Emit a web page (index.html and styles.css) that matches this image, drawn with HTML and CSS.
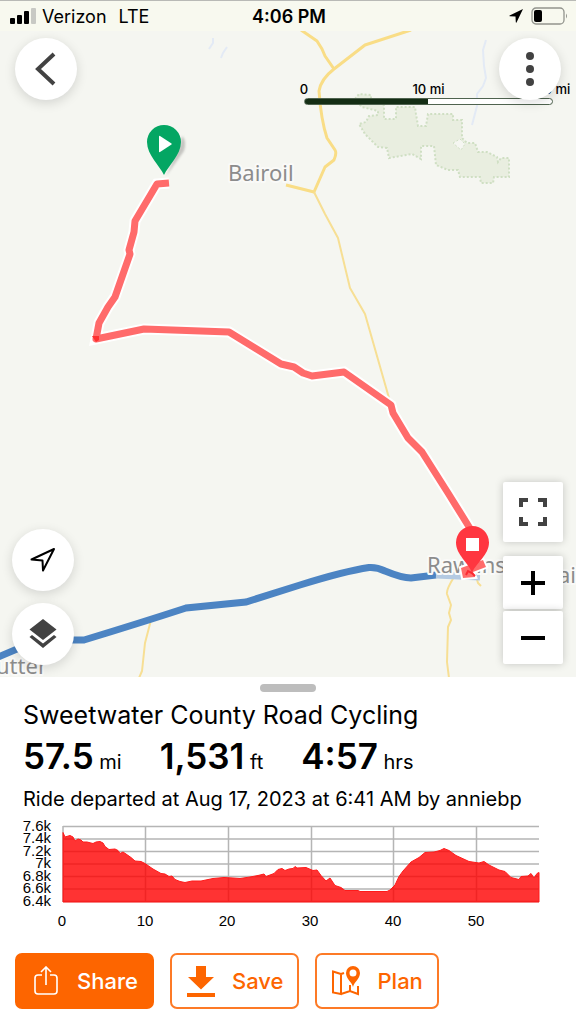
FILE: index.html
```html
<!DOCTYPE html>
<html lang="en">
<head>
  <meta charset="UTF-8" />
  <meta name="viewport" content="width=device-width, initial-scale=1.0"/>
  <title>Sweetwater County Road Cycling</title>
  <link rel="stylesheet" href="styles.css">
</head>
<body>

  <header class="status-bar">
    <div class="status-left">
      <svg class="signal" viewBox="0 0 26 16" width="26" height="16" aria-hidden="true">
        <rect x="0" y="10" width="5" height="6" rx="1"/>
        <rect x="7" y="7" width="5" height="9" rx="1"/>
        <rect x="14" y="3" width="5" height="13" rx="1"/>
        <rect x="21" y="0" width="5" height="16" rx="1" fill="#c8c9c4"/>
      </svg>
      <span>Verizon</span>
      <span class="network">LTE</span>
    </div>
    <div class="clock">4:06 PM</div>
    <div class="status-right">
      <svg viewBox="0 0 14 14" width="14" height="14" aria-hidden="true">
        <path d="M14 0 L7.500 13.500 Q7 14 6.800 13.200 L6.500 7.500 L.8 7.200 Q0 7 .6 6.500 Z"/>
      </svg>
      <svg viewBox="0 0 37 18" width="37" height="18" aria-hidden="true">
        <rect x="1" y="1" width="32" height="16" rx="4" fill="none" stroke="#92948d" stroke-width="1.300"/>
        <rect x="3" y="3" width="8" height="12" rx="2"/>
        <path d="M35 6.500 Q37 9 35 11.500 Z" fill="#92948d"/>
      </svg>
    </div>
  </header>

  <main class="map">
    <svg class="map-canvas" viewBox="0 30 576 648" preserveAspectRatio="xMidYMid slice" role="img" aria-label="Route map">
      <!-- public land -->
      <path class="park" d="M355 99 L359 94 L371 95 L371 100 L384 105 L384 119 L396 119 L396 107 L415 107 L416 114 L418 126 L426 126 L428 114 L453 114 L453 120 L462 120 L462 138 L467 143 L475 143 L478 152 L487 152 L497 157 L498 162 L501 158 L509 158 L509 177 L494 177 L493 183 L481 183 L480 177 L460 177 L458 170 L448 170 L436 165 L434 146 L421 146 L421 159 L412 154 L389 158 L387 148 L378 147 L365 134 L359 124 L366 122 L369 116 L378 115 L378 111 L362 107 Z"/>
      <path class="park-hole" d="M453 143 L460 139 L465 144 L461 150 Z"/>

      <!-- creeks -->
      <path class="creek" d="M213 38 L213 43 L209 49 M227 47 L223 53 L221 58"/>
      <path class="creek" d="M486 40 L483 50 L484 66 L486 78 L483 86 L477 94 L477 106 L472 125"/>

      <!-- roads -->
      <path class="road" d="M301 30 L317 41 L322 49 L325 56 L334 69"/>
      <path class="road" d="M411 30 L365 45 L334 69 Q321 79 319 91 Q321 120 327 138 L335 150 Q337 153 334 160 L325 167 L314 192 L286 185"/>
      <path class="road thin" d="M314 192 L325 214 L338 238 L350 288 L365 314 L391 405"/>
      <path class="road thin" d="M454 577 Q446 590 447 594 L451 605 L449 613 L451 620 L448 627 L447 662 L449 678"/>
      <path class="road thin" d="M476 576 L478 583 L481 586"/>
      <path class="road thin" d="M151 620 L145 643 L142 671 L139 678"/>
      <path class="highway" d="M-4 658 L24 646 L50 640 L84 640 Q140 623 186 608 L246 602 L300 585 Q345 571 369 567.500 Q377 567 385 571 Q402 578 411 578 L436 575"/>
      <path class="highway faded" d="M436 575 L480 577"/>

      <text class="place" x="228" y="181">Bairoil</text>
      <text class="place" x="427" y="573">Rawlins</text>
      <text class="place" x="558" y="583">air</text>
      <text class="place" x="-4" y="674">utter</text>

      <!-- ride track -->
      <path class="track-casing" d="M169 183 L157 184 L135 221 L134 232 L129 250 L130 254 L115 297 L108 307 L99 323 L96 339 L144 329 L229 332 L281 364 L294 367 L303 373 L312 376 L344 372 L391 405 L393 413 L408 438 L422 452 L448 493 L471 530"/>
      <path class="track" d="M169 183 L157 184 L135 221 L134 232 L129 250 L130 254 L115 297 L108 307 L99 323 L96 339 L144 329 L229 332 L281 364 L294 367 L303 373 L312 376 L344 372 L391 405 L393 413 L408 438 L422 452 L448 493 L471 530"/>
      <path d="M92 336 L99 336 L99 340 L96 342 Z" fill="#ff3030"/>
      <path d="M461 568 L483 560 L486 567 L473 572 L475 577 L463 578 Z" fill="#ff6b6b" stroke="#fff" stroke-width="4" paint-order="stroke"/>

      <!-- start pin -->
      <path class="pin-shadow" d="M166 176 L184 151 Q187 141 182 136 L180 146 Z"/>
      <path d="M164 175 C160 166 147 155 147 142 A17 17 0 0 1 181 142 C181 155 168 166 164 175 Z" fill="#04a663"/>
      <path d="M159 136.500 Q159 135.500 160 136 L171.500 143.500 Q172 144 171.500 144.500 L160 152 Q159 152.500 159 151.500 Z" fill="#fff"/>

      <!-- finish pin -->
      <path d="M472 573 C469 563 456 555 456 542.500 A16.300 16.300 0 0 1 489 542.500 C489 555 476 563 472 573 Z" fill="#ff3640"/>
      <rect x="466" y="538" width="13" height="13" fill="#fff"/>
      <path d="M466 575 L468 571 L472 573 L475 576" fill="none" stroke="#fb2a32" stroke-width="2"/>
    </svg>

    <div class="scale">
      <div class="scale-labels">
        <span>0</span>
        <span>10 mi</span>
        <span>20 mi</span>
      </div>
      <div class="scale-bar"></div>
    </div>

    <div class="map-top">
      <button class="round-btn" aria-label="Back">
        <svg viewBox="0 0 36 36" width="36" height="36"><path d="M26 3 L10 18 L26 33" fill="none" stroke="#424242" stroke-width="4"/></svg>
      </button>
      <button class="round-btn" aria-label="More options">
        <svg viewBox="0 0 36 36" width="36" height="36" fill="#424242"><circle cx="18" cy="5" r="4"/><circle cx="18" cy="18" r="4"/><circle cx="18" cy="31" r="4"/></svg>
      </button>
    </div>

    <div class="map-left">
      <button class="round-btn" aria-label="My location">
        <svg viewBox="0 0 26 26" width="26" height="26"><path d="M24 2 L13 23.500 L12.500 13.500 L1.500 12.500 Z" fill="none" stroke="#000" stroke-width="2" stroke-linejoin="round"/></svg>
      </button>
      <button class="round-btn" aria-label="Map layers">
        <svg viewBox="0 0 28 30" width="28" height="30" fill="#424242"><path d="M14 0 L27.500 10.500 L14 21 L.5 10.500 Z"/><path d="M.5 18 L3 16 L14 24.500 L25 16 L27.500 18 L14 29 Z"/></svg>
      </button>
    </div>

    <div class="map-right">
      <button class="square-btn fullscreen" aria-label="Full screen">
        <svg viewBox="0 0 28 28" width="28" height="28"><path d="M2 9 V2 H9 M19 2 H26 V9 M26 19 V26 H19 M9 26 H2 V19" fill="none" stroke="#424242" stroke-width="4"/></svg>
      </button>
      <button class="square-btn" aria-label="Zoom in">
        <svg viewBox="0 0 26 26" width="26" height="26"><path d="M1 13 H25 M13 1 V25" stroke="#000" stroke-width="4"/></svg>
      </button>
      <button class="square-btn" aria-label="Zoom out">
        <svg viewBox="0 0 26 26" width="26" height="26"><path d="M1 13 H25" stroke="#000" stroke-width="4"/></svg>
      </button>
    </div>
  </main>

  <section class="sheet">
    <div class="handle"></div>
    <h1>Sweetwater County Road Cycling</h1>
    <div class="stats">
      <div><strong>57.5</strong> mi</div>
      <div><strong>1,531</strong> ft</div>
      <div><strong>4:57</strong> hrs</div>
    </div>
    <p class="departed">Ride departed at Aug 17, 2023 at 6:41 AM by anniebp</p>

    <svg class="elevation" viewBox="0 0 576 120" role="img" aria-label="Elevation profile">
      <path class="grid" d="M63 12.500 H539 M63 25 H539 M63 37.500 H539 M63 50 H539 M63 62.500 H539 M63 75 H539 M63 87.500 H539 M63 12 V88 M145.500 12 V88 M228.500 12 V88 M311.500 12 V88 M393.500 12 V88 M476.500 12 V88"/>
      <path class="profile" d="M63 18.500 L65 23 L70 21.500 L73 23 L75 27 L78 25 L81 26 L83 28 L87 28 L93 29.500 L96 28 L100 27.500 L103 29 L105 32.500 L109 35.500 L115 35 L118 36.500 L120 39.500 L123 38 L126 40 L131 43.500 L135 47 L141 47.500 L145 49.500 L153 55 L161 59.500 L165 60 L169 62.500 L172 62 L175 65.500 L180 67.500 L185 68.500 L192 67 L201 67 L213 64.500 L224 63.500 L233 64 L240 64.500 L250 63 L258 61.500 L264 60 L266 62.500 L274 59.500 L278 55.500 L282 54.500 L285 56.500 L289 55 L293 54.500 L295 52.500 L297 54 L306 53.500 L313 56.500 L317 56 L321 61.500 L326 67 L330 64 L335 71.500 L341 73.500 L345 76.500 L358 76.500 L360 77.500 L387 77.500 L390 76 L395 71 L399 62.500 L403 57 L411 48 L419 43.500 L425 38.500 L434 38 L440 36.500 L444 34.500 L449 36.500 L456 41.500 L469 47.500 L479 49 L484 47.500 L489 51 L499 56 L505 57.500 L511 63.500 L519 65.500 L521 62.500 L528 62 L531 59.500 L534 64 L537 59.500 L539 58.500 V88 H63 Z"/>
      <g class="y-axis">
        <text x="51" y="17">7.6k</text>
        <text x="51" y="29">7.4k</text>
        <text x="51" y="42">7.2k</text>
        <text x="51" y="54">7k</text>
        <text x="51" y="67">6.8k</text>
        <text x="51" y="79">6.6k</text>
        <text x="51" y="92">6.4k</text>
      </g>
      <g class="x-axis">
        <text x="62" y="112">0</text>
        <text x="145" y="112">10</text>
        <text x="227" y="112">20</text>
        <text x="310" y="112">30</text>
        <text x="393" y="112">40</text>
        <text x="476" y="112">50</text>
      </g>
    </svg>

    <div class="actions">
      <button class="action-btn primary">
        <svg viewBox="0 0 30 30" width="30" height="30" fill="none" stroke="#fff" stroke-width="1.600"><path d="M11 9 H7 Q4 9 4 12 V25 Q4 28 7 28 H23 Q26 28 26 25 V12 Q26 9 23 9 H19 M15 19 V1 M10 6 L15 1 L20 6"/></svg>
        Share
      </button>
      <button class="action-btn">
        <svg viewBox="0 0 30 32" width="30" height="32" fill="#fd6500"><path d="M10 1 H20 V12 H28 L15 24.500 L2 12 H10 Z"/><path d="M1 28 H29 V32 H1 Z"/></svg>
        Save
      </button>
      <button class="action-btn">
        <svg viewBox="0 0 30 30" width="30" height="30"><path d="M2 5.500 L10 8 V28 L2 26.500 Z M10 28 L19 25 L27 28 V20 M19 25 V19 M10 8 L13 7" fill="none" stroke="#fd6500" stroke-width="2"/><path d="M22 21 C21 16 15 13 15 7 A7 7 0 0 1 29 7 C29 13 23 16 22 21 Z M22 3.500 A3.500 3.500 0 1 0 22 10.500 A3.500 3.500 0 1 0 22 3.500 Z" fill="#fd6500" fill-rule="evenodd"/></svg>
        Plan
      </button>
    </div>
  </section>

</body>
</html>
```

FILE: styles.css
```css
* {
  box-sizing: border-box;
}

body {
  display: flex;
  flex-direction: column;
  min-height: 100vh;
  margin: 0;
  font-family: Inter, sans-serif;
  color: #000;
  background: #fff;
}

button {
  display: flex;
  align-items: center;
  justify-content: center;
  padding: 0;
  border: none;
  background: #fff;
  font-family: inherit;
  cursor: pointer;
}

/* status bar */
.status-bar {
  display: grid;
  grid-template-columns: 1fr auto 1fr;
  align-items: center;
  height: 31px;
  padding: 0 8px 0 10px;
  border-top: 1px solid #b9bab6;
  background: #f8f9ef;
  font-size: 18px;
}

.status-left {
  display: flex;
  align-items: center;
  gap: 6px;
}

.network {
  margin-left: 6px;
}

.clock {
  font-weight: 600;
}

.status-right {
  display: flex;
  align-items: center;
  justify-content: flex-end;
  gap: 8px;
}

/* map */
.map {
  position: relative;
  flex: 1;
  min-height: 400px;
  overflow: hidden;
  background: #f5f6f1;
}

.map-canvas {
  position: absolute;
  inset: 0;
  width: 100%;
  height: 100%;
}

.park {
  fill: #e9eee0;
  stroke: #cfdfc3;
  stroke-width: 2;
  stroke-dasharray: 2 2;
}

.park-hole {
  fill: #f5f6f1;
  stroke: #cfdfc3;
  stroke-dasharray: 2 2;
}

.creek {
  fill: none;
  stroke: #e3eaf5;
  stroke-width: 2;
}

.road {
  fill: none;
  stroke: #f9dd86;
  stroke-width: 3;
  stroke-linejoin: round;
}

.road.thin {
  stroke: #f7df94;
  stroke-width: 2;
}

.highway {
  fill: none;
  stroke: #4c84c3;
  stroke-width: 7;
}

.highway.faded {
  stroke: #b4cae2;
}

.place {
  font-family: "Noto Sans", sans-serif;
  font-size: 22px;
  fill: #8c8c8c;
  stroke: #fafaf8;
  stroke-width: 4;
  stroke-linejoin: round;
  paint-order: stroke;
}

.track-casing {
  fill: none;
  stroke: #fff;
  stroke-width: 11;
}

.track {
  fill: none;
  stroke: #ff6b6b;
  stroke-width: 7;
  stroke-linejoin: round;
}

.pin-shadow {
  fill: #c4c4c0;
  filter: blur(1px);
}

.scale {
  position: absolute;
  top: 49px;
  right: 23px;
  width: 249px;
  font-size: 13px;
  font-weight: 500;
  line-height: 18px;
}

.scale-labels {
  display: flex;
  justify-content: space-between;
}

.scale-labels span {
  display: flex;
  justify-content: center;
  width: 0;
  white-space: nowrap;
}

.scale-bar {
  height: 7px;
  border: 1px solid #4f634f;
  border-radius: 4px;
  background: linear-gradient(to right, #142d14 50%, #fff 50%);
}

.map-top {
  position: absolute;
  top: 7px;
  left: 15px;
  right: 15px;
  display: flex;
  justify-content: space-between;
}

.map-left {
  position: absolute;
  left: 12px;
  bottom: 12px;
  display: flex;
  flex-direction: column;
  gap: 12px;
}

.map-right {
  position: absolute;
  right: 13px;
  bottom: 13px;
  display: flex;
  flex-direction: column;
  gap: 2px;
}

.round-btn {
  width: 62px;
  height: 62px;
  border-radius: 50%;
  box-shadow: 0 3px 12px rgba(0, 0, 0, 0.14);
}

.square-btn {
  width: 60px;
  height: 53px;
  border-radius: 2px;
  box-shadow: 0 0 8px rgba(0, 0, 0, 0.2);
}

.fullscreen {
  height: 60px;
  margin-bottom: 12px;
}

/* bottom sheet */
.sheet {
  padding: 7px 0 15px;
}

.handle {
  width: 56px;
  height: 8px;
  margin: 0 auto 7px;
  border-radius: 4px;
  background: #bdbdbd;
}

h1 {
  margin: 0 23px;
  font-size: 25px;
  font-weight: 400;
  line-height: 32px;
}

.stats {
  display: flex;
  gap: 38px;
  margin: 6px 23px 4px;
  font-size: 20px;
  line-height: 38px;
}

.stats strong {
  font-size: 35px;
  font-weight: 600;
}

.departed {
  margin: 0 23px 1px;
  font-size: 20px;
  line-height: 28px;
}

.elevation {
  display: block;
  width: 100%;
  font-family: "Liberation Sans", sans-serif;
  font-size: 15px;
}

.grid {
  fill: none;
  stroke: #b5b5b5;
  stroke-width: 1.5;
}

.profile {
  fill: #ff0000;
  fill-opacity: 0.8;
  stroke: #ff1a1a;
}

.y-axis {
  text-anchor: end;
}

.x-axis {
  text-anchor: middle;
}

.actions {
  display: flex;
  gap: 16px;
  margin: 19px 15px 0;
}

.action-btn {
  gap: 16px;
  height: 56px;
  padding: 0 14px;
  border: 2px solid #fd7a26;
  border-radius: 7px;
  color: #fd6500;
  font-size: 22px;
  font-weight: 500;
}

.action-btn.primary {
  border-color: #fd6500;
  background: #fd6500;
  color: #fff;
}
```
